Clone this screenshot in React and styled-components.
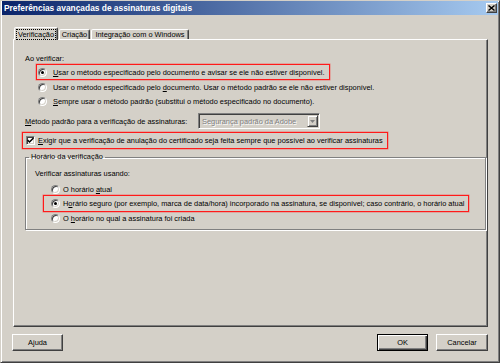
import styled, { createGlobalStyle } from 'styled-components';

const GlobalStyle = createGlobalStyle`
  html, body { margin: 0; padding: 0; background: #d4d0c8; }
  body {
    font-family: "Liberation Sans", Arial, sans-serif;
    font-size: 7.4px;
    color: #000;
  }
  * { box-sizing: border-box; }
`;

const Window = styled.div`
  width: 500px;
  height: 363px;
  display: flex;
  flex-direction: column;
  background: #d4d0c8;
  border: 1px solid;
  border-color: #d4d0c8 #404040 #404040 #d4d0c8;
  box-shadow: inset 1px 1px #fff, inset -1px -1px #808080;
  padding: 0 1px 1px 1px;
`;

const TitleBar = styled.div`
  height: 14px;
  display: flex;
  align-items: center;
  justify-content: space-between;
  padding: 0 1px 0 2px;
  background: linear-gradient(to right, #0a246a, #a6caf0);
  color: #fff;
  font-weight: bold;
  font-size: 8.4px;
`;

const CloseButton = styled.div`
  width: 11px;
  height: 10px;
  display: flex;
  align-items: center;
  justify-content: center;
  background: #d4d0c8;
  border: 1px solid;
  border-color: #fff #404040 #404040 #fff;
  box-shadow: inset -1px -1px #808080;
`;

const Body = styled.div`
  flex: 1;
  display: flex;
  flex-direction: column;
  padding: 12px 10px 0 11px;
`;

const TabRow = styled.div`
  display: flex;
  align-items: flex-end;
  height: 12px;
  padding-left: 1px;
  position: relative;
  z-index: 1;
`;

const Tab = styled.div`
  width: ${(p) => p.$w}px;
  height: ${(p) => (p.$active ? 13 : 10)}px;
  margin-bottom: ${(p) => (p.$active ? -1 : 0)}px;
  margin-left: ${(p) => (p.$first ? 0 : 1)}px;
  display: flex;
  align-items: center;
  justify-content: center;
  background: #d4d0c8;
  border: 1px solid;
  border-bottom: none;
  border-color: #fff #404040 transparent #fff;
  border-radius: 2px 2px 0 0;
  box-shadow: inset -1px 0 #808080;
  white-space: nowrap;
`;

const FocusText = styled.span`
  outline: 1px dotted #000;
  outline-offset: 0;
  padding: 0 1px;
  line-height: 9px;
`;

const Panel = styled.div`
  height: 288px;
  display: flex;
  flex-direction: column;
  border: 1px solid;
  border-color: #fff #404040 #404040 #fff;
  box-shadow: inset -1px -1px #808080;
  padding: 0 1px 0 11px;
`;

const Label = styled.div`
  height: ${(p) => p.$h || 12}px;
  margin-top: ${(p) => p.$mt || 0}px;
  margin-left: ${(p) => p.$ml || 0}px;
  display: flex;
  align-items: center;
  white-space: nowrap;
`;

const Highlight = styled.div`
  width: fit-content;
  height: ${(p) => p.$h}px;
  margin-top: ${(p) => p.$mt || 0}px;
  margin-left: ${(p) => p.$ml}px;
  padding: 0 4px 0 ${(p) => p.$pl}px;
  display: flex;
  align-items: center;
  border: 1px solid #ff1a1a;
  box-shadow: 0 0 0 0.5px rgba(255, 40, 40, 0.5);
`;

const Option = styled.div`
  height: ${(p) => p.$h || 14}px;
  margin-top: ${(p) => p.$mt || 0}px;
  margin-left: ${(p) => p.$ml || 0}px;
  display: flex;
  align-items: center;
  gap: ${(p) => p.$gap ?? 6}px;
  white-space: nowrap;
`;

const Radio = styled.span`
  position: relative;
  width: 9px;
  height: 9px;
  flex: none;
  border-radius: 50%;
  background: #fff;
  border: 1px solid;
  border-color: #808080 #fff #fff #808080;
  box-shadow: inset 1px 1px #404040, inset -1px -1px #d4d0c8;

  &::after {
    content: '';
    display: ${(p) => (p.$on ? 'block' : 'none')};
    position: absolute;
    left: 2px;
    top: 2px;
    width: 3px;
    height: 3px;
    border-radius: 50%;
    background: #000;
  }
`;

const Check = styled.span`
  width: 9px;
  height: 9px;
  flex: none;
  display: flex;
  align-items: center;
  justify-content: center;
  background: #fff;
  border: 1px solid;
  border-color: #808080 #fff #fff #808080;
  box-shadow: inset 1px 1px #404040, inset -1px -1px #d4d0c8;
`;

const Key = styled.span`
  text-decoration: underline;
  text-underline-offset: 1px;
`;

const MethodRow = styled.div`
  height: 16px;
  margin-top: 5px;
  display: flex;
  align-items: center;
`;

const MethodLabel = styled.span`
  width: 173px;
  white-space: nowrap;
`;

const Combo = styled.div`
  width: 122px;
  height: 16px;
  display: flex;
  align-items: center;
  justify-content: space-between;
  padding: 0 1px 0 3px;
  border: 1px solid;
  border-color: #808080 #fff #fff #808080;
  box-shadow: inset 1px 1px #404040, inset -1px -1px #d4d0c8;
  color: #808080;
  text-shadow: 1px 1px 0 #fff;
  white-space: nowrap;
`;

const ComboArrow = styled.span`
  width: 11px;
  height: 12px;
  display: flex;
  align-items: center;
  justify-content: center;
  background: #d4d0c8;
  border: 1px solid;
  border-color: #d4d0c8 #404040 #404040 #d4d0c8;
  box-shadow: inset 1px 1px #fff, inset -1px -1px #808080;
`;

const Group = styled.fieldset`
  height: 78px;
  margin: 3px 0 0 0;
  padding: 0 0 0 9px;
  min-width: 0;
  display: flex;
  flex-direction: column;
  border: 1px solid #808080;
  box-shadow: inset 1px 1px #fff, 1px 1px #fff;
`;

const Legend = styled.legend`
  margin-left: -6px;
  padding: 0 2px;
  line-height: 10px;
  height: 10px;
`;

const Footer = styled.div`
  height: 17px;
  margin-top: 7px;
  display: flex;
  align-items: center;
`;

const Button = styled.div`
  width: ${(p) => p.$w}px;
  height: 17px;
  margin-left: ${(p) => p.$ml || 0}px;
  margin-right: ${(p) => p.$mr || 0}px;
  display: flex;
  align-items: center;
  justify-content: center;
  background: #d4d0c8;
  border: 1px solid;
  border-color: ${(p) => (p.$default ? '#000' : '#fff #404040 #404040 #fff')};
  box-shadow: ${(p) =>
    p.$default
      ? 'inset 1px 1px #fff, inset -1px -1px #404040, inset -2px -2px #808080'
      : 'inset -1px -1px #808080'};
`;

const Spacer = styled.div`
  flex: 1;
`;

const App = () => (
  <>
    <GlobalStyle />
    <Window>
      <TitleBar>
        <span>Preferências avançadas de assinaturas digitais</span>
        <CloseButton>
          <svg width="7" height="6" viewBox="0 0 7 6">
            <path d="M0.5 0.5 L6.5 5.5 M6.5 0.5 L0.5 5.5" stroke="#000" strokeWidth="1.4" />
          </svg>
        </CloseButton>
      </TitleBar>
      <Body>
        <TabRow>
          <Tab $w={44} $active $first>
            <FocusText>Verificação</FocusText>
          </Tab>
          <Tab $w={31}>Criação</Tab>
          <Tab $w={98}>Integração com o Windows</Tab>
        </TabRow>
        <Panel>
          <Label $mt={13} $h={11}>Ao verificar:</Label>
          <Highlight $h={16} $ml={11} $pl={1}>
            <Option $h={14}>
              <Radio $on />
              <span>
                <Key>U</Key>sar o método especificado pelo documento e avisar se ele não estiver disponível.
              </span>
            </Option>
          </Highlight>
          <Option $ml={13}>
            <Radio />
            <span>
              Usar o método especificado pelo <Key>d</Key>ocumento. Usar o método padrão se ele não estiver disponível.
            </span>
          </Option>
          <Option $ml={13}>
            <Radio />
            <span>
              <Key>S</Key>empre usar o método padrão (substitui o método especificado no documento).
            </span>
          </Option>
          <MethodRow>
            <MethodLabel>
              <Key>M</Key>étodo padrão para a verificação de assinaturas:
            </MethodLabel>
            <Combo>
              <span>Segurança padrão da Adobe</span>
              <ComboArrow>
                <svg width="5" height="3" viewBox="0 0 5 3">
                  <path d="M0 0 H5 L2.5 3 Z" fill="#808080" />
                </svg>
              </ComboArrow>
            </Combo>
          </MethodRow>
          <Highlight $h={17} $mt={3} $ml={-3} $pl={3}>
            <Option $h={15} $gap={3}>
              <Check>
                <svg width="7" height="7" viewBox="0 0 7 7">
                  <path d="M0.5 3 L2.5 5 L6.5 1" stroke="#000" strokeWidth="1.5" fill="none" />
                </svg>
              </Check>
              <span>
                <Key>E</Key>xigir que a verificação de anulação do certificado seja feita sempre que possível ao verificar assinaturas
              </span>
            </Option>
          </Highlight>
          <Group>
            <Legend>Horário da verificação</Legend>
            <Label $mt={5} $h={12}>Verificar assinaturas usando:</Label>
            <Option $mt={5} $ml={16} $h={11} $gap={3}>
              <Radio />
              <span>
                O horário <Key>a</Key>tual
              </span>
            </Option>
            <Highlight $h={17} $ml={8} $pl={7}>
              <Option $h={15} $gap={3}>
                <Radio $on />
                <span>
                  H<Key>o</Key>rário seguro (por exemplo, marca de data/hora) incorporado na assinatura, se disponível; caso contrário, o horário atual
                </span>
              </Option>
            </Highlight>
            <Option $ml={16} $h={12} $gap={3}>
              <Radio />
              <span>
                O <Key>h</Key>orário no qual a assinatura foi criada
              </span>
            </Option>
          </Group>
        </Panel>
        <Footer>
          <Button $w={51} $ml={-1}>
            A<Key>j</Key>uda
          </Button>
          <Spacer />
          <Button $w={51} $mr={8} $default>
            OK
          </Button>
          <Button $w={52}>Cancelar</Button>
        </Footer>
      </Body>
    </Window>
  </>
);

export default App;
